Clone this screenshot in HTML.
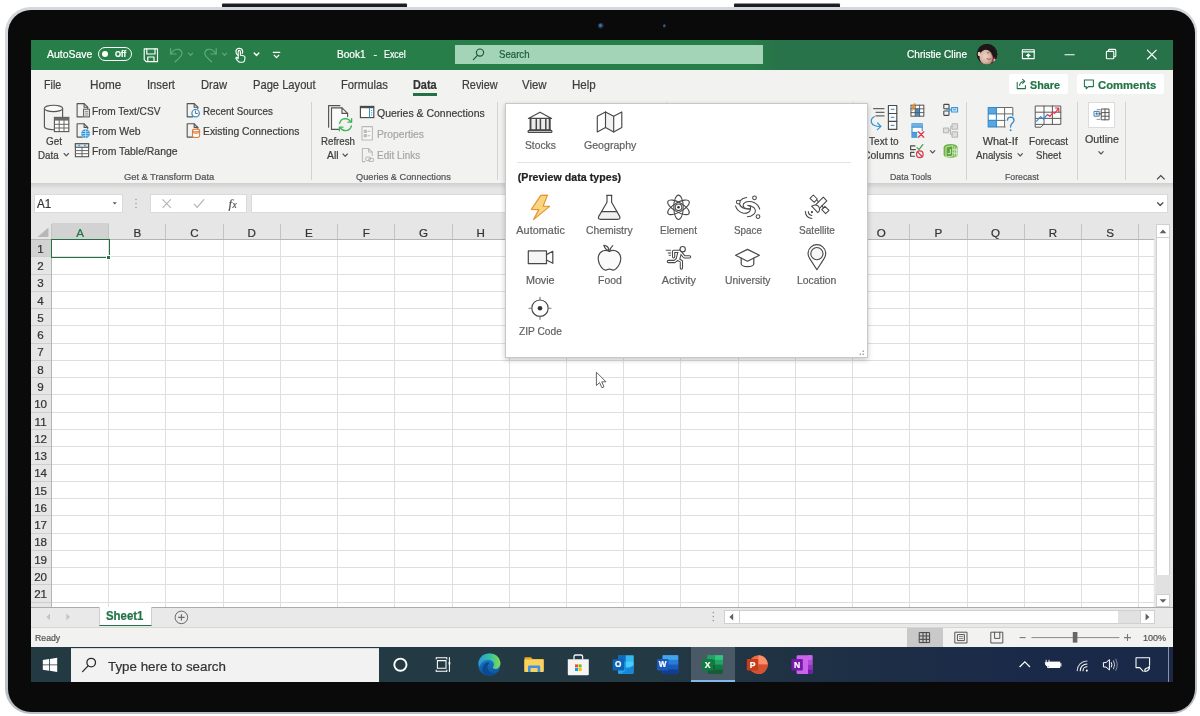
<!DOCTYPE html>
<html lang="en"><head><meta charset="utf-8"><title>Excel - Data Types</title>
<style>
html,body{margin:0;padding:0;background:#fff;}
body{width:1200px;height:716px;position:relative;overflow:hidden;font-family:"Liberation Sans",sans-serif;}
#stage{position:absolute;left:0;top:0;width:1200px;height:716px;overflow:hidden;will-change:transform;}
#stage div,#stage svg,#stage span{position:absolute;box-sizing:border-box;}
#stage svg{overflow:visible;}
.t{white-space:pre;line-height:1;transform-origin:0 50%;-webkit-text-stroke:0.22px currentColor;}
</style></head><body><div id="stage">
<div style="left:222.00px;top:3.40px;width:185.00px;height:5.60px;background:#1d1e22;border-radius:1.5px 1.5px 0 0;border-top:1px solid #8d9196;"></div>
<div style="left:734.00px;top:3.40px;width:106.00px;height:5.60px;background:#1d1e22;border-radius:1.5px 1.5px 0 0;border-top:1px solid #8d9196;"></div>
<div style="left:5.30px;top:6.80px;width:1192.10px;height:707.00px;background:linear-gradient(180deg,#d4d8dc,#b9bec4);border-radius:25.5px;"></div>
<div style="left:7.80px;top:9.60px;width:1187.20px;height:702.00px;background:#0a0a0a;border-radius:23px;"></div>
<div style="left:598.00px;top:22.60px;width:6.40px;height:6.40px;background:radial-gradient(circle at 40% 40%,#5b86b8 0,#1d3350 45%,#0a0f18 75%);border-radius:50%;"></div>
<div style="left:663.00px;top:24.20px;width:3.40px;height:3.40px;background:radial-gradient(circle at 40% 40%,#4a74a8 0,#16263d 60%,#0a0a0a 100%);border-radius:50%;"></div>
<div style="left:31.00px;top:40.20px;width:1141.80px;height:642.10px;background:#fff;"></div>
<div style="left:31.00px;top:40.20px;width:1141.80px;height:29.70px;background:linear-gradient(90deg,#277e48 0%,#277e48 63%,#28734a 65.5%,#28724a 100%);"></div>
<div style="left:31.00px;top:69.50px;width:1141.80px;height:113.70px;background:#f2f2f1;"></div>
<div style="left:31.00px;top:183.20px;width:1141.80px;height:40.10px;background:#e6e6e6;"></div>
<div style="left:31.00px;top:183.20px;width:1141.80px;height:5.80px;background:linear-gradient(180deg,rgba(0,0,0,.10),rgba(0,0,0,0));"></div>
<span class="t" style="left:47.00px;top:49.49px;font-size:11px;color:#ffffff;transform:scaleX(0.9517);">AutoSave</span>
<div style="left:97.50px;top:46.80px;width:34.70px;height:14.40px;border:1.1px solid #fff;border-radius:8px;"></div>
<div style="left:102.20px;top:51.00px;width:6.20px;height:6.20px;background:#fff;border-radius:50%;"></div>
<span class="t" style="left:115.20px;top:50.41px;font-size:8.4px;color:#ffffff;transform:scaleX(0.9234);font-weight:700;">Off</span>
<span class="t" style="left:336.90px;top:49.21px;font-size:10.6px;color:#ffffff;transform:scaleX(0.9549);">Book1</span>
<span class="t" style="left:373.60px;top:49.21px;font-size:10.6px;color:#ffffff;">-</span>
<span class="t" style="left:383.60px;top:49.21px;font-size:10.6px;color:#ffffff;transform:scaleX(0.8372);">Excel</span>
<div style="left:455.00px;top:45.00px;width:307.50px;height:19.20px;background:#a3d4b8;"></div>
<span class="t" style="left:498.90px;top:49.39px;font-size:11px;color:#1d5a38;transform:scaleX(0.8751);">Search</span>
<span class="t" style="left:906.50px;top:49.28px;font-size:11.2px;color:#ffffff;transform:scaleX(0.9024);">Christie Cline</span>
<span class="t" style="left:43.80px;top:78.53px;font-size:12.2px;color:#3e3e3e;transform:scaleX(0.8749);">File</span>
<span class="t" style="left:89.60px;top:78.53px;font-size:12.2px;color:#3e3e3e;transform:scaleX(0.9648);">Home</span>
<span class="t" style="left:147.00px;top:78.53px;font-size:12.2px;color:#3e3e3e;transform:scaleX(0.9177);">Insert</span>
<span class="t" style="left:200.70px;top:78.53px;font-size:12.2px;color:#3e3e3e;transform:scaleX(0.9168);">Draw</span>
<span class="t" style="left:252.50px;top:78.53px;font-size:12.2px;color:#3e3e3e;transform:scaleX(0.9151);">Page Layout</span>
<span class="t" style="left:341.30px;top:78.53px;font-size:12.2px;color:#3e3e3e;transform:scaleX(0.9224);">Formulas</span>
<span class="t" style="left:413.40px;top:78.53px;font-size:12.2px;color:#333;transform:scaleX(0.8924);font-weight:700;">Data</span>
<div style="left:413.20px;top:93.40px;width:24.20px;height:3.00px;background:#217346;"></div>
<span class="t" style="left:461.50px;top:78.53px;font-size:12.2px;color:#3e3e3e;transform:scaleX(0.8924);">Review</span>
<span class="t" style="left:521.90px;top:78.53px;font-size:12.2px;color:#3e3e3e;transform:scaleX(0.9381);">View</span>
<span class="t" style="left:571.70px;top:78.53px;font-size:12.2px;color:#3e3e3e;transform:scaleX(0.9485);">Help</span>
<div style="left:1009.20px;top:74.00px;width:59.20px;height:20.20px;background:#fff;border-radius:2.5px;"></div>
<div style="left:1076.60px;top:74.00px;width:87.70px;height:20.20px;background:#fff;border-radius:2.5px;"></div>
<span class="t" style="left:1030.00px;top:79.06px;font-size:11.6px;color:#217346;transform:scaleX(0.9305);font-weight:700;">Share</span>
<span class="t" style="left:1098.00px;top:79.06px;font-size:11.6px;color:#217346;transform:scaleX(0.9709);font-weight:700;">Comments</span>
<span class="t" style="left:46.00px;top:135.84px;font-size:10.9px;color:#3e3e3e;transform:scaleX(0.9107);">Get</span>
<span class="t" style="left:38.40px;top:149.84px;font-size:10.9px;color:#3e3e3e;transform:scaleX(0.8947);">Data</span>
<span class="t" style="left:92.00px;top:106.04px;font-size:10.9px;color:#3e3e3e;transform:scaleX(0.9295);">From Text/CSV</span>
<span class="t" style="left:92.00px;top:126.14px;font-size:10.9px;color:#3e3e3e;transform:scaleX(0.9610);">From Web</span>
<span class="t" style="left:92.00px;top:146.44px;font-size:10.9px;color:#3e3e3e;transform:scaleX(0.9567);">From Table/Range</span>
<span class="t" style="left:202.50px;top:106.04px;font-size:10.9px;color:#3e3e3e;transform:scaleX(0.9013);">Recent Sources</span>
<span class="t" style="left:202.50px;top:126.14px;font-size:10.9px;color:#3e3e3e;transform:scaleX(0.9480);">Existing Connections</span>
<span class="t" style="left:124.00px;top:172.16px;font-size:9.4px;color:#555;letter-spacing:-0.049px;">Get &amp; Transform Data</span>
<div style="left:311.00px;top:101.60px;width:1.00px;height:78.40px;background:#d4d2d0;"></div>
<span class="t" style="left:321.00px;top:136.04px;font-size:10.9px;color:#3e3e3e;transform:scaleX(0.8908);">Refresh</span>
<span class="t" style="left:327.00px;top:150.24px;font-size:10.9px;color:#3e3e3e;transform:scaleX(0.9493);">All</span>
<span class="t" style="left:376.80px;top:107.84px;font-size:10.9px;color:#3e3e3e;transform:scaleX(0.9617);">Queries &amp; Connections</span>
<span class="t" style="left:376.80px;top:129.24px;font-size:10.9px;color:#a6a6a6;transform:scaleX(0.9461);">Properties</span>
<span class="t" style="left:376.80px;top:150.44px;font-size:10.9px;color:#a6a6a6;transform:scaleX(0.9141);">Edit Links</span>
<span class="t" style="left:356.00px;top:172.16px;font-size:9.4px;color:#555;transform:scaleX(0.9828);">Queries &amp; Connections</span>
<div style="left:497.00px;top:101.60px;width:1.00px;height:78.40px;background:#d4d2d0;"></div>
<div style="left:666.20px;top:101.60px;width:1.00px;height:1.80px;background:#d4d2d0;"></div>
<div style="left:852.80px;top:101.60px;width:1.00px;height:1.80px;background:#d4d2d0;"></div>
<span class="t" style="left:869.30px;top:135.84px;font-size:10.9px;color:#3e3e3e;transform:scaleX(0.9250);">Text to</span>
<span class="t" style="left:863.30px;top:149.84px;font-size:10.9px;color:#3e3e3e;transform:scaleX(0.9579);">Columns</span>
<span class="t" style="left:889.50px;top:172.16px;font-size:9.4px;color:#555;transform:scaleX(0.9380);">Data Tools</span>
<div style="left:966.10px;top:101.60px;width:1.00px;height:78.40px;background:#d4d2d0;"></div>
<span class="t" style="left:982.80px;top:135.84px;font-size:10.9px;color:#3e3e3e;letter-spacing:-0.038px;">What-If</span>
<span class="t" style="left:976.00px;top:149.84px;font-size:10.9px;color:#3e3e3e;transform:scaleX(0.8943);">Analysis</span>
<span class="t" style="left:1028.80px;top:135.84px;font-size:10.9px;color:#3e3e3e;transform:scaleX(0.9245);">Forecast</span>
<span class="t" style="left:1035.70px;top:149.84px;font-size:10.9px;color:#3e3e3e;transform:scaleX(0.8811);">Sheet</span>
<span class="t" style="left:1004.60px;top:172.16px;font-size:9.4px;color:#555;transform:scaleX(0.9298);">Forecast</span>
<div style="left:1076.50px;top:101.60px;width:1.00px;height:78.40px;background:#d4d2d0;"></div>
<div style="left:1088.00px;top:102.40px;width:27.20px;height:25.60px;background:#fff;border:1px solid #dcdcdc;"></div>
<span class="t" style="left:1084.70px;top:134.14px;font-size:10.9px;color:#3e3e3e;transform:scaleX(0.9845);">Outline</span>
<div style="left:1124.50px;top:101.60px;width:1.00px;height:78.40px;background:#d4d2d0;"></div>
<div style="left:33.70px;top:194.00px;width:88.90px;height:19.40px;background:#fff;border:1px solid #dadada;"></div>
<span class="t" style="left:36.80px;top:198.24px;font-size:12px;color:#333;transform:scaleX(0.9674);">A1</span>
<div style="left:150.40px;top:194.00px;width:97.00px;height:19.40px;background:#fff;border:1px solid #dadada;"></div>
<div style="left:250.80px;top:194.00px;width:917.40px;height:19.40px;background:#fff;border:1px solid #dadada;"></div>
<span class="t" style="left:228.60px;top:197.10px;font-size:13px;color:#555;font-family:'Liberation Serif',serif;font-style:italic;">f</span>
<span class="t" style="left:232.60px;top:200.61px;font-size:9.5px;color:#555;font-family:'Liberation Serif',serif;font-style:italic;">x</span>
<div style="left:31.00px;top:223.30px;width:1141.80px;height:16.20px;background:#e6e6e6;"></div>
<div style="left:31.00px;top:239.50px;width:20.50px;height:367.50px;background:#e6e6e6;"></div>
<div style="left:51.50px;top:223.30px;width:57.22px;height:16.20px;background:#d2d2d2;"></div>
<div style="left:31.00px;top:239.50px;width:20.50px;height:17.27px;background:#d2d2d2;"></div>
<svg style="left:0.00px;top:0.00px;" width="1200.00" height="716.00" viewBox="0 0 1200 716"><path d="M51.50 239.5 V607.0" stroke="#dfdfdf" stroke-width="1"/><path d="M51.50 224 V239.5" stroke="#c3c3c3" stroke-width="1"/><path d="M108.50 239.5 V607.0" stroke="#dfdfdf" stroke-width="1"/><path d="M108.50 224 V239.5" stroke="#c3c3c3" stroke-width="1"/><path d="M165.50 239.5 V607.0" stroke="#dfdfdf" stroke-width="1"/><path d="M165.50 224 V239.5" stroke="#c3c3c3" stroke-width="1"/><path d="M223.50 239.5 V607.0" stroke="#dfdfdf" stroke-width="1"/><path d="M223.50 224 V239.5" stroke="#c3c3c3" stroke-width="1"/><path d="M280.50 239.5 V607.0" stroke="#dfdfdf" stroke-width="1"/><path d="M280.50 224 V239.5" stroke="#c3c3c3" stroke-width="1"/><path d="M337.50 239.5 V607.0" stroke="#dfdfdf" stroke-width="1"/><path d="M337.50 224 V239.5" stroke="#c3c3c3" stroke-width="1"/><path d="M394.50 239.5 V607.0" stroke="#dfdfdf" stroke-width="1"/><path d="M394.50 224 V239.5" stroke="#c3c3c3" stroke-width="1"/><path d="M452.50 239.5 V607.0" stroke="#dfdfdf" stroke-width="1"/><path d="M452.50 224 V239.5" stroke="#c3c3c3" stroke-width="1"/><path d="M509.50 239.5 V607.0" stroke="#dfdfdf" stroke-width="1"/><path d="M509.50 224 V239.5" stroke="#c3c3c3" stroke-width="1"/><path d="M566.50 239.5 V607.0" stroke="#dfdfdf" stroke-width="1"/><path d="M566.50 224 V239.5" stroke="#c3c3c3" stroke-width="1"/><path d="M623.50 239.5 V607.0" stroke="#dfdfdf" stroke-width="1"/><path d="M623.50 224 V239.5" stroke="#c3c3c3" stroke-width="1"/><path d="M680.50 239.5 V607.0" stroke="#dfdfdf" stroke-width="1"/><path d="M680.50 224 V239.5" stroke="#c3c3c3" stroke-width="1"/><path d="M738.50 239.5 V607.0" stroke="#dfdfdf" stroke-width="1"/><path d="M738.50 224 V239.5" stroke="#c3c3c3" stroke-width="1"/><path d="M795.50 239.5 V607.0" stroke="#dfdfdf" stroke-width="1"/><path d="M795.50 224 V239.5" stroke="#c3c3c3" stroke-width="1"/><path d="M852.50 239.5 V607.0" stroke="#dfdfdf" stroke-width="1"/><path d="M852.50 224 V239.5" stroke="#c3c3c3" stroke-width="1"/><path d="M909.50 239.5 V607.0" stroke="#dfdfdf" stroke-width="1"/><path d="M909.50 224 V239.5" stroke="#c3c3c3" stroke-width="1"/><path d="M967.50 239.5 V607.0" stroke="#dfdfdf" stroke-width="1"/><path d="M967.50 224 V239.5" stroke="#c3c3c3" stroke-width="1"/><path d="M1024.50 239.5 V607.0" stroke="#dfdfdf" stroke-width="1"/><path d="M1024.50 224 V239.5" stroke="#c3c3c3" stroke-width="1"/><path d="M1081.50 239.5 V607.0" stroke="#dfdfdf" stroke-width="1"/><path d="M1081.50 224 V239.5" stroke="#c3c3c3" stroke-width="1"/><path d="M1138.50 239.5 V607.0" stroke="#dfdfdf" stroke-width="1"/><path d="M1138.50 224 V239.5" stroke="#c3c3c3" stroke-width="1"/><path d="M51.5 239.50 H1154.4" stroke="#dfdfdf" stroke-width="1"/><path d="M31 239.50 H51.5" stroke="#cdcdcd" stroke-width="1"/><path d="M51.5 256.50 H1154.4" stroke="#dfdfdf" stroke-width="1"/><path d="M31 256.50 H51.5" stroke="#cdcdcd" stroke-width="1"/><path d="M51.5 274.50 H1154.4" stroke="#dfdfdf" stroke-width="1"/><path d="M31 274.50 H51.5" stroke="#cdcdcd" stroke-width="1"/><path d="M51.5 291.50 H1154.4" stroke="#dfdfdf" stroke-width="1"/><path d="M31 291.50 H51.5" stroke="#cdcdcd" stroke-width="1"/><path d="M51.5 308.50 H1154.4" stroke="#dfdfdf" stroke-width="1"/><path d="M31 308.50 H51.5" stroke="#cdcdcd" stroke-width="1"/><path d="M51.5 325.50 H1154.4" stroke="#dfdfdf" stroke-width="1"/><path d="M31 325.50 H51.5" stroke="#cdcdcd" stroke-width="1"/><path d="M51.5 343.50 H1154.4" stroke="#dfdfdf" stroke-width="1"/><path d="M31 343.50 H51.5" stroke="#cdcdcd" stroke-width="1"/><path d="M51.5 360.50 H1154.4" stroke="#dfdfdf" stroke-width="1"/><path d="M31 360.50 H51.5" stroke="#cdcdcd" stroke-width="1"/><path d="M51.5 377.50 H1154.4" stroke="#dfdfdf" stroke-width="1"/><path d="M31 377.50 H51.5" stroke="#cdcdcd" stroke-width="1"/><path d="M51.5 394.50 H1154.4" stroke="#dfdfdf" stroke-width="1"/><path d="M31 394.50 H51.5" stroke="#cdcdcd" stroke-width="1"/><path d="M51.5 412.50 H1154.4" stroke="#dfdfdf" stroke-width="1"/><path d="M31 412.50 H51.5" stroke="#cdcdcd" stroke-width="1"/><path d="M51.5 429.50 H1154.4" stroke="#dfdfdf" stroke-width="1"/><path d="M31 429.50 H51.5" stroke="#cdcdcd" stroke-width="1"/><path d="M51.5 446.50 H1154.4" stroke="#dfdfdf" stroke-width="1"/><path d="M31 446.50 H51.5" stroke="#cdcdcd" stroke-width="1"/><path d="M51.5 464.50 H1154.4" stroke="#dfdfdf" stroke-width="1"/><path d="M31 464.50 H51.5" stroke="#cdcdcd" stroke-width="1"/><path d="M51.5 481.50 H1154.4" stroke="#dfdfdf" stroke-width="1"/><path d="M31 481.50 H51.5" stroke="#cdcdcd" stroke-width="1"/><path d="M51.5 498.50 H1154.4" stroke="#dfdfdf" stroke-width="1"/><path d="M31 498.50 H51.5" stroke="#cdcdcd" stroke-width="1"/><path d="M51.5 515.50 H1154.4" stroke="#dfdfdf" stroke-width="1"/><path d="M31 515.50 H51.5" stroke="#cdcdcd" stroke-width="1"/><path d="M51.5 533.50 H1154.4" stroke="#dfdfdf" stroke-width="1"/><path d="M31 533.50 H51.5" stroke="#cdcdcd" stroke-width="1"/><path d="M51.5 550.50 H1154.4" stroke="#dfdfdf" stroke-width="1"/><path d="M31 550.50 H51.5" stroke="#cdcdcd" stroke-width="1"/><path d="M51.5 567.50 H1154.4" stroke="#dfdfdf" stroke-width="1"/><path d="M31 567.50 H51.5" stroke="#cdcdcd" stroke-width="1"/><path d="M51.5 584.50 H1154.4" stroke="#dfdfdf" stroke-width="1"/><path d="M31 584.50 H51.5" stroke="#cdcdcd" stroke-width="1"/><path d="M51.5 602.50 H1154.4" stroke="#dfdfdf" stroke-width="1"/><path d="M31 602.50 H51.5" stroke="#cdcdcd" stroke-width="1"/><path d="M31 239.5 H1154.4" stroke="#b4b4b4" stroke-width="1"/><path d="M51.5 239.5 V607.0" stroke="#b4b4b4" stroke-width="1"/><path d="M1154.4 239.5 V607.0" stroke="#c2c2c2" stroke-width="1"/></svg>
<svg style="left:31.00px;top:223.30px;" width="20.50" height="16.20" viewBox="0 0 20.50 16.20"><path d="M17.5 4.5 V14 H6.5 Z" fill="#b7b7b7"/></svg>
<span class="t" style="left:76.24px;top:227.06px;font-size:11.6px;color:#217346;">A</span>
<span class="t" style="left:133.46px;top:227.06px;font-size:11.6px;color:#333;">B</span>
<span class="t" style="left:190.36px;top:227.06px;font-size:11.6px;color:#333;">C</span>
<span class="t" style="left:247.58px;top:227.06px;font-size:11.6px;color:#333;">D</span>
<span class="t" style="left:305.12px;top:227.06px;font-size:11.6px;color:#333;">E</span>
<span class="t" style="left:362.67px;top:227.06px;font-size:11.6px;color:#333;">F</span>
<span class="t" style="left:418.92px;top:227.06px;font-size:11.6px;color:#333;">G</span>
<span class="t" style="left:476.46px;top:227.06px;font-size:11.6px;color:#333;">H</span>
<span class="t" style="left:536.26px;top:227.06px;font-size:11.6px;color:#333;">I</span>
<span class="t" style="left:592.19px;top:227.06px;font-size:11.6px;color:#333;">J</span>
<span class="t" style="left:648.44px;top:227.06px;font-size:11.6px;color:#333;">K</span>
<span class="t" style="left:706.30px;top:227.06px;font-size:11.6px;color:#333;">L</span>
<span class="t" style="left:761.92px;top:227.06px;font-size:11.6px;color:#333;">M</span>
<span class="t" style="left:819.78px;top:227.06px;font-size:11.6px;color:#333;">N</span>
<span class="t" style="left:876.68px;top:227.06px;font-size:11.6px;color:#333;">O</span>
<span class="t" style="left:934.54px;top:227.06px;font-size:11.6px;color:#333;">P</span>
<span class="t" style="left:991.12px;top:227.06px;font-size:11.6px;color:#333;">Q</span>
<span class="t" style="left:1048.66px;top:227.06px;font-size:11.6px;color:#333;">R</span>
<span class="t" style="left:1106.20px;top:227.06px;font-size:11.6px;color:#333;">S</span>
<span class="t" style="left:37.37px;top:242.80px;font-size:11.6px;color:#333;">1</span>
<span class="t" style="left:37.37px;top:260.07px;font-size:11.6px;color:#333;">2</span>
<span class="t" style="left:37.37px;top:277.34px;font-size:11.6px;color:#333;">3</span>
<span class="t" style="left:37.37px;top:294.61px;font-size:11.6px;color:#333;">4</span>
<span class="t" style="left:37.37px;top:311.88px;font-size:11.6px;color:#333;">5</span>
<span class="t" style="left:37.37px;top:329.15px;font-size:11.6px;color:#333;">6</span>
<span class="t" style="left:37.37px;top:346.42px;font-size:11.6px;color:#333;">7</span>
<span class="t" style="left:37.37px;top:363.69px;font-size:11.6px;color:#333;">8</span>
<span class="t" style="left:37.37px;top:380.96px;font-size:11.6px;color:#333;">9</span>
<span class="t" style="left:34.15px;top:398.23px;font-size:11.6px;color:#333;">10</span>
<span class="t" style="left:34.58px;top:415.50px;font-size:11.6px;color:#333;">11</span>
<span class="t" style="left:34.15px;top:432.77px;font-size:11.6px;color:#333;">12</span>
<span class="t" style="left:34.15px;top:450.04px;font-size:11.6px;color:#333;">13</span>
<span class="t" style="left:34.15px;top:467.31px;font-size:11.6px;color:#333;">14</span>
<span class="t" style="left:34.15px;top:484.58px;font-size:11.6px;color:#333;">15</span>
<span class="t" style="left:34.15px;top:501.85px;font-size:11.6px;color:#333;">16</span>
<span class="t" style="left:34.15px;top:519.12px;font-size:11.6px;color:#333;">17</span>
<span class="t" style="left:34.15px;top:536.39px;font-size:11.6px;color:#333;">18</span>
<span class="t" style="left:34.15px;top:553.66px;font-size:11.6px;color:#333;">19</span>
<span class="t" style="left:34.15px;top:570.93px;font-size:11.6px;color:#333;">20</span>
<span class="t" style="left:34.15px;top:588.20px;font-size:11.6px;color:#333;">21</span>
<div style="left:50.50px;top:238.50px;width:59.22px;height:19.27px;border:1.6px solid #217346;"></div>
<div style="left:106.32px;top:254.57px;width:5.00px;height:5.00px;background:#217346;border:0.8px solid #fff;"></div>
<div style="left:1154.40px;top:223.30px;width:18.40px;height:383.70px;background:#e6e6e6;"></div>
<div style="left:1156.40px;top:223.60px;width:14.00px;height:14.60px;background:#fff;border:1px solid #d0d0d0;"></div>
<div style="left:1156.40px;top:238.20px;width:14.00px;height:336.80px;background:#fff;border-left:1px solid #d0d0d0;border-right:1px solid #d0d0d0;"></div>
<div style="left:1156.40px;top:575.00px;width:14.00px;height:18.60px;background:#e1e1e1;"></div>
<div style="left:1156.40px;top:593.60px;width:14.00px;height:13.70px;background:#fff;border:1px solid #d0d0d0;"></div>
<svg style="left:1156.40px;top:223.60px;" width="14.00" height="14.60" viewBox="0 0 14.00 14.60"><path d="M3.6 9.2 L7 5.6 L10.4 9.2 Z" fill="#606060"/></svg>
<svg style="left:1156.40px;top:593.60px;" width="14.00" height="13.70" viewBox="0 0 14.00 13.70"><path d="M3.6 5.2 L7 8.8 L10.4 5.2 Z" fill="#606060"/></svg>
<div style="left:31.00px;top:607.00px;width:1141.80px;height:20.60px;background:#e9e9e9;border-top:1px solid #ababab;border-bottom:1px solid #d6d6d6;"></div>
<div style="left:99.00px;top:607.00px;width:52.80px;height:18.60px;background:#fff;border-bottom:1.6px solid #217346;border-left:1px solid #cfcfcf;border-right:1px solid #cfcfcf;"></div>
<span class="t" style="left:106.30px;top:610.13px;font-size:12.2px;color:#217346;transform:scaleX(0.9348);font-weight:700;">Sheet1</span>
<svg style="left:40.00px;top:608.00px;" width="40.00" height="18.00" viewBox="0 0 40.00 18.00"><path d="M10 5.6 L6.4 8.9 L10 12.2 Z M26.4 5.6 L30 8.9 L26.4 12.2 Z" fill="#c4c4c4"/></svg>
<svg style="left:174.00px;top:609.50px;" width="15.00" height="15.00" viewBox="0 0 15.00 15.00"><circle cx="7.4" cy="7.4" r="6.3" fill="none" stroke="#6a6a6a" stroke-width="1"/><path d="M7.4 4.2 V10.6 M4.2 7.4 H10.6" stroke="#6a6a6a" stroke-width="1.1"/></svg>
<svg style="left:710.00px;top:609.00px;" width="7.00" height="16.00" viewBox="0 0 7.00 16.00"><circle cx="3.3" cy="3.6" r="0.8" fill="#9a9a9a"/><circle cx="3.3" cy="7.6" r="0.8" fill="#9a9a9a"/><circle cx="3.3" cy="11.6" r="0.8" fill="#9a9a9a"/></svg>
<div style="left:724.40px;top:609.80px;width:430.20px;height:13.80px;background:#fff;border:1px solid #d0d0d0;"></div>
<div style="left:739.20px;top:609.80px;width:1.00px;height:13.80px;background:#d0d0d0;"></div>
<div style="left:1118.20px;top:610.80px;width:21.80px;height:11.80px;background:#e1e1e1;"></div>
<div style="left:1140.00px;top:609.80px;width:14.60px;height:13.80px;background:#fff;border:1px solid #d0d0d0;"></div>
<svg style="left:724.40px;top:609.80px;" width="15.00" height="13.80" viewBox="0 0 15.00 13.80"><path d="M9.2 3.4 L5.4 6.9 L9.2 10.4 Z" fill="#606060"/></svg>
<svg style="left:1140.00px;top:609.80px;" width="14.60" height="13.80" viewBox="0 0 14.60 13.80"><path d="M5.6 3.4 L9.4 6.9 L5.6 10.4 Z" fill="#606060"/></svg>
<div style="left:31.00px;top:627.60px;width:1141.80px;height:19.60px;background:#f2f2f1;"></div>
<span class="t" style="left:34.80px;top:633.25px;font-size:9.6px;color:#555;transform:scaleX(0.9081);">Ready</span>
<div style="left:907.30px;top:627.80px;width:35.40px;height:19.40px;background:#c9c9c9;"></div>
<span class="t" style="left:1142.80px;top:633.25px;font-size:9.6px;color:#555;transform:scaleX(0.9449);">100%</span>
<svg style="left:1015.00px;top:628.00px;" width="120.00" height="19.00" viewBox="0 0 120.00 19.00"><path d="M4.6 9.6 H10.6" stroke="#777" stroke-width="1.1"/><path d="M16.5 9.6 H104.4" stroke="#8a8a8a" stroke-width="1"/><rect x="57.8" y="4" width="4.6" height="10.6" fill="#666"/><path d="M109 9.6 H116 M112.5 6.1 V13.1" stroke="#777" stroke-width="1.1"/></svg>
<div style="left:31.00px;top:647.20px;width:1141.80px;height:35.10px;background:linear-gradient(90deg,#243a43 0%,#233944 55%,#1d2f45 72%,#1b2949 88%,#1b2949 100%);"></div>
<div style="left:71.00px;top:647.90px;width:308.00px;height:34.40px;background:#f2f2f2;border-top:1px solid #d8d8d8;"></div>
<span class="t" style="left:108.00px;top:659.57px;font-size:13.6px;color:#333;transform:scaleX(0.9817);">Type here to search</span>
<div style="left:691.20px;top:647.20px;width:43.60px;height:35.10px;background:#495a66;border-bottom:2px solid #7fb8ea;"></div>
<div style="left:1168.20px;top:647.20px;width:1.00px;height:35.10px;background:#8b93a6;"></div>
<svg style="left:0.00px;top:0.00px;" width="1200.00" height="716.00" viewBox="0 0 1200 716"><g fill="none" stroke="#fff" stroke-width="1.15" stroke-linejoin="round" stroke-linecap="round" ><path d="M144.2 48.8 H157.5 V61.6 H146.2 L144.2 59.6 Z"/><path d="M146.8 48.8 V54 H155 V48.8"/><path d="M147.8 61.6 V57 H154 V61.6"/></g><g fill="none" stroke="#62ab80" stroke-width="1.15" stroke-linejoin="round" stroke-linecap="round" ><path d="M170.6 48.6 V54 H176"/><path d="M170.8 53.8 Q174.2 48.4 179 49.4 Q182.6 50.8 181.8 54.6 Q181.2 56.4 175.2 61.8"/></g><path d="M188.50 53.10 L190.60 55.30 L192.70 53.10" fill="none" stroke="#62ab80" stroke-width="1.1" stroke-linecap="round" stroke-linejoin="round"/><g fill="none" stroke="#62ab80" stroke-width="1.15" stroke-linejoin="round" stroke-linecap="round" ><path d="M216.2 48.6 V54 H210.8"/><path d="M216 53.8 Q212.6 48.4 207.8 49.4 Q204.2 50.8 205 54.6 Q205.6 56.4 211.6 61.8"/></g><path d="M222.50 53.10 L224.60 55.30 L226.70 53.10" fill="none" stroke="#62ab80" stroke-width="1.1" stroke-linecap="round" stroke-linejoin="round"/><g fill="none" stroke="#fff" stroke-width="1.1" stroke-linejoin="round" stroke-linecap="round" ><path d="M238 55.4 Q235.8 53.8 235.9 51.4 Q236.2 48.4 239.3 48.3 Q242.4 48.4 242.7 51.4 Q242.7 52.4 242.2 53.4"/><path d="M238.2 58.6 V51.6 Q238.3 50.4 239.3 50.4 Q240.3 50.4 240.4 51.6 V55.2 L243.6 55.8 Q245.2 56.2 245 57.8 L244.6 60.4 Q244.2 62.2 242.6 62.2 H240 Q238.8 62.2 238 61.2 L236 58.6 Q235.6 57.6 236.6 57.4 Q237.4 57.4 238.2 58.6 Z"/></g><path d="M254.20 52.95 L256.50 55.45 L258.80 52.95" fill="none" stroke="#fff" stroke-width="1.4" stroke-linecap="round" stroke-linejoin="round"/><g fill="none" stroke="#fff" stroke-width="1.2" stroke-linejoin="round" stroke-linecap="round" ><path d="M273.2 52.3 H279.8"/></g><path d="M274.20 55.15 L276.50 57.65 L278.80 55.15" fill="none" stroke="#fff" stroke-width="1.3" stroke-linecap="round" stroke-linejoin="round"/><g fill="none" stroke="#1d5a38" stroke-width="1.2" stroke-linejoin="round" stroke-linecap="round" ><circle cx="480" cy="52.6" r="3.6"/><path d="M477.4 55.4 L473.4 59.6"/></g><defs><clipPath id="avc"><circle cx="987" cy="54.2" r="10.3"/></clipPath><radialGradient id="av" cx="45%" cy="40%" r="65%"><stop offset="0" stop-color="#ecd2c4"/><stop offset="0.6" stop-color="#d9b4a2"/><stop offset="1" stop-color="#9c6f5e"/></radialGradient></defs><g clip-path="url(#avc)"><rect x="976" y="43" width="22" height="23" fill="#1d1517"/><ellipse cx="986.2" cy="57.6" rx="6.6" ry="7.8" fill="url(#av)" transform="rotate(-14 986.2 57.6)"/><path d="M976 52 Q978 46.4 985 46.8 Q991.6 47.6 993.4 52.4 L998 50 V43 H976 Z" fill="#1d1517"/><path d="M993.2 50 Q996.4 54 995.2 60 L998 62 V48 Z" fill="#231a20"/><ellipse cx="979.2" cy="54" rx="1.5" ry="2.3" fill="#e6cabb"/><path d="M991.6 62 Q993.4 58.6 994 56.4 Q995.4 58 994.6 60.6 Q993.6 62.6 991.6 62 Z" fill="#a8404a"/><path d="M993.8 59.4 Q995.6 58.4 996.2 59.8 Q995.6 61.6 993.6 61.8 Z" fill="#ecd6cc"/><path d="M986.6 58.6 Q988.8 60.2 990.8 58.6" fill="none" stroke="#6a3a36" stroke-width="0.7"/><path d="M987 53 Q988.2 52.4 989.4 53 M991.4 54.4 Q992.2 54 993 54.6" fill="none" stroke="#4a3030" stroke-width="0.6"/></g><g fill="none" stroke="#fff" stroke-width="1.1" stroke-linejoin="round" stroke-linecap="round" ><rect x="1022.4" y="49.8" width="11.8" height="8.8"/><path d="M1022.4 51.9 H1034.2" stroke-width="1.4"/></g><path d="M1028.3 53.2 L1031 56 H1029.2 V57.6 H1027.4 V56 H1025.6 Z" fill="#fff"/><g fill="none" stroke="#fff" stroke-width="1.1" stroke-linejoin="round" stroke-linecap="round" ><path d="M1065 54.8 H1074.2"/></g><g fill="none" stroke="#fff" stroke-width="1.1" stroke-linejoin="round" stroke-linecap="round" ><rect x="1106.4" y="51.4" width="7.4" height="7.4" rx="0.8"/><path d="M1108.4 51.2 V50.4 Q1108.4 49.4 1109.4 49.4 H1114.8 Q1115.8 49.4 1115.8 50.4 V55.8 Q1115.8 56.8 1114.8 56.8 H1114"/></g><g fill="none" stroke="#fff" stroke-width="1.15" stroke-linejoin="round" stroke-linecap="round" ><path d="M1147.4 50.2 L1156.2 59 M1156.2 50.2 L1147.4 59"/></g><g fill="none" stroke="#217346" stroke-width="1.05" stroke-linejoin="round" stroke-linecap="round" ><path d="M1017.2 82.2 V88.6 H1025.4 V85.4"/><path d="M1019.6 85.4 Q1020.2 81.6 1024 81.4 M1022.6 79.4 L1024.8 81.4 L1022.6 83.4"/></g><g fill="none" stroke="#217346" stroke-width="1.05" stroke-linejoin="round" stroke-linecap="round" ><path d="M1084.4 80 H1093.4 V86.6 H1088.4 L1086.2 88.8 V86.6 H1084.4 Z"/></g><path d="M1157 179.4 L1160.8 175.6 L1164.6 179.4" fill="none" stroke="#444" stroke-width="1.2"/></svg>
<svg style="left:0.00px;top:0.00px;" width="1200.00" height="716.00" viewBox="0 0 1200 716"><g fill="none" stroke="#555" stroke-width="1.15" stroke-linejoin="round" stroke-linecap="round" ><path d="M44.4 108.4 V126.6 Q44.6 129.2 53.6 129.7 M62.6 108.4 V117" /><ellipse cx="53.5" cy="108.4" rx="9.1" ry="3.2" fill="#fafafa"/></g><rect x="54.4" y="117.4" width="14.4" height="14.2" fill="#fff" stroke="#555" stroke-width="1.1"/><rect x="54.4" y="117.4" width="14.4" height="3.2" fill="#6a6a6a"/><g fill="none" stroke="#666" stroke-width="1.0" stroke-linejoin="round" stroke-linecap="round" ><path d="M54.4 124.3 H68.8 M54.4 128 H68.8 M59.2 120.6 V131.6 M64 120.6 V131.6"/></g><path d="M64.10 153.50 L66.30 155.90 L68.50 153.50" fill="none" stroke="#555" stroke-width="1.15" stroke-linecap="round" stroke-linejoin="round"/><g fill="none" stroke="#555" stroke-width="1.1" stroke-linejoin="round" stroke-linecap="round" ><path d="M82.50 116.90 H77.10 V103.60 H84.10 L87.70 107.20 V108.40"/><path d="M84.10 103.60 V107.20 H87.70"/></g><rect x="83.6" y="109.2" width="5.8" height="7.7" fill="#f3f2f1" stroke="#555" stroke-width="1"/><g fill="none" stroke="#777" stroke-width="0.8" stroke-linejoin="round" stroke-linecap="round" ><path d="M85.2 111.4 H87.8 M85.2 113.2 H87.8 M85.2 115 H87.8"/></g><g fill="none" stroke="#555" stroke-width="1.1" stroke-linejoin="round" stroke-linecap="round" ><path d="M82.50 137.10 H77.10 V123.80 H84.10 L87.70 127.40 V128.60"/><path d="M84.10 123.80 V127.40 H87.70"/></g><circle cx="85.6" cy="133.6" r="4.4" fill="#2e95d8"/><g fill="none" stroke="#d7ecfa" stroke-width="0.7" stroke-linejoin="round" stroke-linecap="round" ><path d="M81.4 133.6 H89.8 M85.6 129.4 V137.8 M82.6 131.2 Q85.6 132.4 88.6 131.2 M82.6 136 Q85.6 134.8 88.6 136"/></g><rect x="75.4" y="143.7" width="13.2" height="13" fill="#fff" stroke="#555" stroke-width="1.1"/><rect x="75.4" y="143.7" width="13.2" height="3.6" fill="#e2e2e2" stroke="#555" stroke-width="1.1"/><g fill="none" stroke="#666" stroke-width="1.0" stroke-linejoin="round" stroke-linecap="round" ><path d="M75.4 150.6 H88.6 M75.4 153.7 H88.6 M82 147.3 V156.7"/></g><path d="M77.8 144.8 H80.6 L79.2 146.4 Z M83.6 144.8 H86.4 L85 146.4 Z" fill="#2e95d8"/><g fill="none" stroke="#555" stroke-width="1.1" stroke-linejoin="round" stroke-linecap="round" ><path d="M192.60 116.90 H187.20 V103.60 H194.20 L197.80 107.20 V108.40"/><path d="M194.20 103.60 V107.20 H197.80"/></g><circle cx="195.6" cy="113.2" r="3.7" fill="#fff" stroke="#2b8acb" stroke-width="1.2"/><g fill="none" stroke="#555" stroke-width="0.9" stroke-linejoin="round" stroke-linecap="round" ><path d="M195.4 111 V113.4 H197.4"/></g><g fill="none" stroke="#555" stroke-width="1.1" stroke-linejoin="round" stroke-linecap="round" ><path d="M192.60 137.10 H187.20 V123.80 H194.20 L197.80 127.40 V128.60"/><path d="M194.20 123.80 V127.40 H197.80"/></g><g fill="none" stroke="#e07b39" stroke-width="1.1" stroke-linejoin="round" stroke-linecap="round" ><path d="M192.5 130.6 V136.2 Q192.6 137.5 196 137.5 Q199.5 137.5 199.6 136.2 V130.6 M192.5 132.6 Q196 134 199.6 132.6" fill="#fff"/><ellipse cx="196.05" cy="130.5" rx="3.55" ry="1.4" fill="#fff"/></g><g fill="none" stroke="#555" stroke-width="1.15" stroke-linejoin="round" stroke-linecap="round" ><path d="M328.6 127.2 V105.6 H340"/></g><g fill="none" stroke="#555" stroke-width="1.15" stroke-linejoin="round" stroke-linecap="round" ><path d="M338.6 129.4 H331.5 V107.8 H342 L347.6 113.4 V116.6" fill="#fafafa"/><path d="M342 107.8 V113.4 H347.6"/></g><circle cx="345.5" cy="124.7" r="7.6" fill="#f3f2f1"/><g fill="none" stroke="#3cb55a" stroke-width="1.3" stroke-linejoin="round" stroke-linecap="round" ><path d="M339.6 123.4 Q340.8 118.8 345.5 118.7 Q349 118.8 350.8 121.8 M351.4 126 Q350.2 130.6 345.5 130.7 Q342 130.6 340.2 127.6"/><path d="M351.6 118.6 V122.2 H348 M339.4 130.8 V127.2 H343"/></g><path d="M343.00 154.00 L345.20 156.40 L347.40 154.00" fill="none" stroke="#555" stroke-width="1.15" stroke-linecap="round" stroke-linejoin="round"/><rect x="360.4" y="106.4" width="13.4" height="11.2" fill="#fff" stroke="#4a4a4a" stroke-width="1.15"/><rect x="360.4" y="106.2" width="13.4" height="2" fill="#4a4a4a"/><path d="M369.5 108 V117.4" stroke="#2e95d8" stroke-width="1"/><path d="M371.6 110 V111 M371.6 112.2 V113.2 M371.6 114.4 V115.4" stroke="#2e95d8" stroke-width="1.1"/><g fill="none" stroke="#b9b9b9" stroke-width="1.05" stroke-linejoin="round" stroke-linecap="round" ><rect x="362" y="126.6" width="10.4" height="13.3" fill="#f6f6f6"/><rect x="364.2" y="130.2" width="2.2" height="2.2" fill="#c6c6c6"/><rect x="364.2" y="134.6" width="2.2" height="2.2" fill="#c6c6c6"/><path d="M368 131.3 H370 M368 135.7 H370"/></g><g fill="none" stroke="#b9b9b9" stroke-width="1.05" stroke-linejoin="round" stroke-linecap="round" ><path d="M365 161.6 H362.4 V148.4 H368.6 L372.2 152 V155.4"/><path d="M368.6 148.4 V152 H372.2"/><rect x="365.6" y="157" width="5" height="3.4" rx="1.7"/><rect x="368.6" y="158.2" width="5" height="3.4" rx="1.7"/></g><g fill="none" stroke="#666" stroke-width="1.25" stroke-linejoin="round" stroke-linecap="round" ><path d="M873.6 108.6 H884 M876 112.3 H884 M876 115.9 H884"/></g><g fill="none" stroke="#3a96d2" stroke-width="1.2" stroke-linejoin="round" stroke-linecap="round" ><path d="M874.4 116.6 Q870.2 119 871.6 123 Q873.4 126.6 880.6 126.4 M877.6 123 L881 126.4 L877.4 129.6"/></g><g fill="none" stroke="#4a4a4a" stroke-width="1.15" stroke-linejoin="round" stroke-linecap="round" ><rect x="888.4" y="105.5" width="8.4" height="23.9" fill="#fdfdfd"/><path d="M888.4 113.5 H896.8 M888.4 121.4 H896.8"/></g><g fill="none" stroke="#4aa0dc" stroke-width="1.1" stroke-linejoin="round" stroke-linecap="round" ><path d="M891.2 109.4 H894 M891.2 117.4 H894 M891.2 125.4 H894"/></g><rect x="911" y="105.2" width="12.8" height="11" fill="#fff" stroke="#5a5a5a" stroke-width="1.05"/><rect x="915.2" y="108.6" width="4.4" height="7.6" fill="#3a8fd0"/><g fill="none" stroke="#5a5a5a" stroke-width="0.95" stroke-linejoin="round" stroke-linecap="round" ><path d="M911 108.8 H923.8 M911 112.6 H923.8 M915.2 105.2 V116.2 M919.6 105.2 V116.2"/></g><path d="M914.2 103.2 L911.2 108.2 H913 L911.6 112 L916 106.6 H913.8 L915.6 103.2 Z" fill="#f08a24"/><rect x="912" y="123.8" width="10.2" height="13.4" fill="#fff" stroke="#3a8fd0" stroke-width="1.1"/><rect x="912" y="123.8" width="10.2" height="3.4" fill="#6db3e6"/><rect x="912" y="132.4" width="5.4" height="4.8" fill="#4a9fe0"/><g fill="none" stroke="#3a8fd0" stroke-width="1" stroke-linejoin="round" stroke-linecap="round" ><path d="M912 127.2 H922.2 M912 132.4 H922.2"/></g><rect x="917.4" y="131" width="7.2" height="6.8" fill="#f3f2f1"/><g fill="none" stroke="#e0384c" stroke-width="1.25" stroke-linejoin="round" stroke-linecap="round" ><path d="M918.4 131.8 L923.8 137.2 M923.8 131.8 L918.4 137.2"/></g><g fill="none" stroke="#4a4a4a" stroke-width="1.15" stroke-linejoin="round" stroke-linecap="round" ><path d="M915 145.8 H910.6 V149.6 H915.4 M914 152.4 H910.6 V156.2 H914.6"/></g><g fill="none" stroke="#3aa655" stroke-width="1.25" stroke-linejoin="round" stroke-linecap="round" ><path d="M917 147.6 L919 149.6 L922.8 144.6"/></g><g fill="none" stroke="#d83b4a" stroke-width="1.25" stroke-linejoin="round" stroke-linecap="round" ><circle cx="919.8" cy="154.2" r="3.3" fill="#f3f2f1"/><path d="M917.5 151.9 L922.1 156.5"/></g><path d="M930.40 150.60 L932.60 153.00 L934.80 150.60" fill="none" stroke="#555" stroke-width="1.15" stroke-linecap="round" stroke-linejoin="round"/><g fill="none" stroke="#4a4a4a" stroke-width="1.1" stroke-linejoin="round" stroke-linecap="round" ><rect x="943.8" y="104.4" width="5.2" height="4.4" rx="0.6"/><rect x="943.8" y="111" width="5.2" height="4.4" rx="0.6"/></g><g fill="none" stroke="#3a96d2" stroke-width="1.05" stroke-linejoin="round" stroke-linecap="round" ><rect x="951.6" y="107.6" width="6" height="4.4" fill="#d7ecfa"/><path d="M946.4 109.8 H950.4 M949 108.2 L950.6 109.8 L949 111.4"/><path d="M953.4 109.8 H955.8"/></g><g fill="none" stroke="#b4b4b4" stroke-width="1.0" stroke-linejoin="round" stroke-linecap="round" ><rect x="943.8" y="128" width="5" height="4.8" fill="#dedede"/><rect x="952.4" y="123.8" width="5.2" height="5.4" fill="#dedede"/><rect x="952.4" y="131.8" width="5.2" height="5.4" fill="#dedede"/><path d="M948.8 130.4 H950.6 V126.4 H952.4 M950.6 130.4 V134.6 H952.4"/></g><path d="M943.6 147.6 Q943.8 144.2 950.6 144 Q957.4 144.2 957.6 147.6 V154.4 Q957.4 157.6 950.6 157.8 Q943.8 157.6 943.6 154.4 Z" fill="#6db544"/><g fill="none" stroke="#e6f4dc" stroke-width="0.8" stroke-linejoin="round" stroke-linecap="round" ><path d="M946.4 147 L952.8 145.6 V156 L946.4 157 Z" fill="#5da23a"/><path d="M954.8 146.8 V156.4 M956.6 148 V155.4 M952.8 149.6 L957.4 150.2 M952.8 153 L957.4 153.2"/><path d="M948.2 153.6 H950.4 V149.4"/></g><rect x="988.2" y="107.5" width="24.6" height="19.4" fill="#fff"/><rect x="988.2" y="107.5" width="8.2" height="6.4" fill="#5ba6de"/><rect x="988.2" y="120.4" width="8.2" height="6.5" fill="#5ba6de"/><g fill="none" stroke="#6a6a6a" stroke-width="1.0" stroke-linejoin="round" stroke-linecap="round" ><path d="M996.4 107.5 H1012.8 V117 M996.4 113.9 H1012.8 M996.4 120.4 H1006 M996.4 126.9 H1006 M1004.6 107.5 V126.9"/></g><g fill="none" stroke="#2f8ad0" stroke-width="1.1" stroke-linejoin="round" stroke-linecap="round" ><path d="M988.2 107.5 H996.4 V126.9 H988.2 Z M988.2 113.9 H996.4 M988.2 120.4 H996.4"/></g><rect x="1005.6" y="116.2" width="10" height="15.4" fill="#f3f2f1"/><g fill="none" stroke="#2f8ad0" stroke-width="1.3" stroke-linejoin="round" stroke-linecap="round" ><path d="M1007.4 120.2 Q1007.6 117.2 1010.8 117.2 Q1014 117.4 1014 120.2 Q1014 122 1012 123.4 Q1010.6 124.6 1010.6 127"/></g><circle cx="1010.6" cy="130.2" r="0.95" fill="#2f8ad0"/><g fill="none" stroke="#5a5a5a" stroke-width="1.0" stroke-linejoin="round" stroke-linecap="round" ><path d="M1035.6 106 H1060.8 V124.4 H1043.6 L1041 127.2 H1035.6 Z" fill="#fafafa"/><path d="M1035.6 112.2 H1060.8 M1035.6 118.4 H1060.8 M1044 106 V124.4 M1052.4 106 V124.4 M1035.6 124.4 H1043.6"/></g><g fill="none" stroke="#2f8ad0" stroke-width="1.2" stroke-linejoin="round" stroke-linecap="round" ><path d="M1036.6 121.2 L1040.6 116.6 L1043.4 119 L1047.4 114.6"/></g><g fill="none" stroke="#e0384c" stroke-width="1.2" stroke-linejoin="round" stroke-linecap="round" ><path d="M1047.4 114.6 L1050 116.4 L1053.2 112.2 L1054.6 113.4 L1058.6 108.4 M1055.4 108 L1058.8 108.2 L1058.8 111.6"/></g><g fill="none" stroke="#2f6fa8" stroke-width="0.9" stroke-linejoin="round" stroke-linecap="round" ><rect x="1094.4" y="111.4" width="4.8" height="4.8"/><path d="M1095.6 113.8 H1098 M1096.8 112.6 V115"/></g><g fill="none" stroke="#555" stroke-width="1.0" stroke-linejoin="round" stroke-linecap="round" ><rect x="1101.6" y="109" width="7.4" height="10.8"/><path d="M1101.6 112.6 H1109 M1101.6 116.2 H1109 M1105 109 V119.8 M1099.2 113.8 H1101.6"/><path d="M1097 109.6 H1100 M1097 119.4 H1100" stroke="#9a9a9a"/></g><path d="M1098.80 151.60 L1101.00 154.00 L1103.20 151.60" fill="none" stroke="#555" stroke-width="1.15" stroke-linecap="round" stroke-linejoin="round"/><path d="M1018.00 153.60 L1020.20 156.00 L1022.40 153.60" fill="none" stroke="#555" stroke-width="1.15" stroke-linecap="round" stroke-linejoin="round"/></svg>
<svg style="left:0.00px;top:0.00px;" width="1200.00" height="716.00" viewBox="0 0 1200 716"><path d="M112.6 202.2 H116.8 L114.7 204.6 Z" fill="#5a5a5a"/><circle cx="136" cy="199.6" r="0.75" fill="#9a9a9a"/><circle cx="136" cy="203.6" r="0.75" fill="#9a9a9a"/><circle cx="136" cy="207.6" r="0.75" fill="#9a9a9a"/><g fill="none" stroke="#b4b4b4" stroke-width="1.1" stroke-linejoin="round" stroke-linecap="round" ><path d="M162.8 199.6 L170.6 207.6 M170.6 199.6 L162.8 207.6"/></g><g fill="none" stroke="#b4b4b4" stroke-width="1.2" stroke-linejoin="round" stroke-linecap="round" ><path d="M194.2 204.2 L197.2 207.4 L203.8 199.6"/></g><path d="M1157.60 202.80 L1160.20 205.60 L1162.80 202.80" fill="none" stroke="#555" stroke-width="1.4" stroke-linecap="round" stroke-linejoin="round"/></svg>
<svg style="left:0.00px;top:0.00px;" width="1200.00" height="716.00" viewBox="0 0 1200 716"><g fill="none" stroke="#444" stroke-width="1.0" stroke-linejoin="round" stroke-linecap="round" ><rect x="919.6" y="632.6" width="10" height="10"/><path d="M919.6 636 H929.6 M919.6 639.3 H929.6 M923 632.6 V642.6 M926.3 632.6 V642.6"/></g><g fill="none" stroke="#555" stroke-width="1.0" stroke-linejoin="round" stroke-linecap="round" ><rect x="955.2" y="632.2" width="11.8" height="10.8"/><rect x="957.8" y="634.6" width="6.6" height="6"/><path d="M959.4 636.6 H962.8 M959.4 638.6 H962.8" stroke-width="0.7"/></g><g fill="none" stroke="#555" stroke-width="1.0" stroke-linejoin="round" stroke-linecap="round" ><rect x="991.2" y="632.2" width="11.6" height="10.8"/><path d="M994.6 632.2 V638.4 H999.8 V632.2"/></g></svg>
<div style="left:504.60px;top:103.20px;width:363.00px;height:255.00px;background:#fff;border:1px solid #c8c8c8;box-shadow:0 2px 5px rgba(0,0,0,.22);"></div>
<div style="left:517.00px;top:162.00px;width:334.00px;height:1.00px;background:#e3e3e3;"></div>
<svg style="left:0.00px;top:0.00px;" width="1200.00" height="716.00" viewBox="0 0 1200 716"><g fill="none" stroke="#484848" stroke-width="1.15" stroke-linejoin="round" stroke-linecap="round"><path d="M528.4 118.4 L540 112.2 L551.6 118.4 Z" fill="#fff"/>
<path d="M530.6 119.2 V129.6 M549.6 119.2 V129.6" stroke-width="1.7"/>
<path d="M530.6 119.4 H549.6 V129.6 H530.6 Z" fill="#ececec" stroke="none"/>
<path d="M530.6 119.2 V129.6 M549.6 119.2 V129.6" stroke-width="1.7"/>
<path d="M536.3 119.2 V129.6 M540.4 119.2 V129.6 M545.8 119.2 V129.6" stroke-width="1.5"/>
<path d="M529.6 129.9 H550.6" />
<path d="M529.2 130.4 H550.8 Q552 130.4 552 131.4 Q552 132.4 550.8 132.4 H529.2 Q528 132.4 528 131.4 Q528 130.4 529.2 130.4 Z" fill="#e6e6e6"/></g></svg>
<span class="t" style="left:525.00px;top:139.60px;font-size:10.8px;color:#626262;transform:scaleX(0.9503);">Stocks</span>
<svg style="left:0.00px;top:0.00px;" width="1200.00" height="716.00" viewBox="0 0 1200 716"><g fill="none" stroke="#484848" stroke-width="1.15" stroke-linejoin="round" stroke-linecap="round"><path d="M605.5 111.9 L613.7 116.2 V132 L605.5 127.6 Z" fill="#f2f2f2" stroke="none"/>
<path d="M597.3 116.2 L605.5 111.9 L613.7 116.2 L621.8 111.9 V127.6 L613.7 132 L605.5 127.6 L597.3 132 Z"/>
<path d="M605.5 111.9 V127.6 M613.7 116.2 V132"/></g></svg>
<span class="t" style="left:583.60px;top:139.60px;font-size:10.8px;color:#626262;transform:scaleX(0.9806);">Geography</span>
<span class="t" style="left:517.70px;top:171.71px;font-size:10.6px;color:#222;letter-spacing:0.052px;font-weight:700;">(Preview data types)</span>
<svg style="left:0.00px;top:0.00px;" width="1200.00" height="716.00" viewBox="0 0 1200 716"><g fill="none" stroke="#484848" stroke-width="1.15" stroke-linejoin="round" stroke-linecap="round"><path d="M540.8 195.3 L547.5 195.1 L543.1 206.2 L549.7 206.4 L533.6 219.6 L538.8 209.6 L531.4 209.4 Z" fill="#f9d582" stroke="#e8952f" stroke-width="1.2"/></g></svg>
<span class="t" style="left:516.30px;top:224.60px;font-size:10.8px;color:#626262;letter-spacing:0.072px;">Automatic</span>
<svg style="left:0.00px;top:0.00px;" width="1200.00" height="716.00" viewBox="0 0 1200 716"><g fill="none" stroke="#484848" stroke-width="1.15" stroke-linejoin="round" stroke-linecap="round"><path d="M601.3 211.6 H617.1 L619.8 216.6 Q620.6 219.2 618.2 219.3 H600.2 Q597.8 219.2 598.6 216.6 Z" fill="#f0f0f0" stroke="none"/>
<path d="M606.7 195.4 H611.9 M607 195.4 V202.2 L598.6 216.6 Q597.8 219.2 600.2 219.3 H618.2 Q620.6 219.2 619.8 216.6 L611.6 202.2 V195.4"/>
<path d="M601.5 211.6 H616.9"/></g></svg>
<span class="t" style="left:585.80px;top:224.60px;font-size:10.8px;color:#626262;transform:scaleX(0.9587);">Chemistry</span>
<svg style="left:0.00px;top:0.00px;" width="1200.00" height="716.00" viewBox="0 0 1200 716"><g fill="none" stroke="#484848" stroke-width="1.05" stroke-linejoin="round" stroke-linecap="round"><ellipse cx="678.5" cy="207.3" rx="4.7" ry="12.2"/>
<ellipse cx="678.5" cy="207.3" rx="4.7" ry="12.2" transform="rotate(60 678.5 207.3)"/>
<ellipse cx="678.5" cy="207.3" rx="4.7" ry="12.2" transform="rotate(-60 678.5 207.3)"/>
<circle cx="678.5" cy="207.3" r="3.3"/><circle cx="678.5" cy="207.3" r="1.3" fill="#333" stroke="none"/></g></svg>
<span class="t" style="left:660.00px;top:224.60px;font-size:10.8px;color:#626262;transform:scaleX(0.9339);">Element</span>
<svg style="left:0.00px;top:0.00px;" width="1200.00" height="716.00" viewBox="0 0 1200 716"><g fill="none" stroke="#484848" stroke-width="1.05" stroke-linejoin="round" stroke-linecap="round"><circle cx="754.5" cy="197.8" r="1.9"/><circle cx="758" cy="216.6" r="1.9"/><circle cx="738.3" cy="202.1" r="1.9"/>
<path d="M740 200.8 Q742.6 197.8 746.6 197.4"/>
<path d="M739.4 204 Q740.6 207.4 744.4 208.4 Q748.4 209.4 750 208.9 Q750.9 207.2 750.4 206.2"/>
<path d="M735.5 205.9 Q737.2 211.6 743.4 213.2 Q748.8 213.6 750.2 210.2 Q750.8 208 750.4 206.2 Q749.6 205.6 748 205.4"/>
<path d="M750.2 208.9 Q746.4 208.9 744.2 207.6 Q742.4 205.8 743.6 203.6 Q745.4 201.4 749.4 201.5 Q754.4 201.8 757.6 205.2 Q759.2 207.2 759.7 209.2"/>
<path d="M748 205.4 Q752 205.6 754.2 207.8 Q756.2 210.4 755.2 212.6 Q753.6 215.4 750.6 216.2 Q749 216.6 747.3 216.7"/></g></svg>
<span class="t" style="left:733.60px;top:224.60px;font-size:10.8px;color:#626262;transform:scaleX(0.9143);">Space</span>
<svg style="left:0.00px;top:0.00px;" width="1200.00" height="716.00" viewBox="0 0 1200 716"><g fill="none" stroke="#484848" stroke-width="1.05" stroke-linejoin="round" stroke-linecap="round"><path d="M823.3 197.1 L826.8 200.9 L819 208.8 L815.4 205.2 Z"/>
<path d="M811.6 206.2 Q817 203.6 819 207 Q820.6 210.6 817.8 212.6 Z" fill="#fff"/>
<path d="M813.3 195 L817.3 199 L814.2 202.3 L810 198.3 Z"/>
<path d="M824.9 206.4 L829 210.4 L825.6 213.7 L821.8 209.7 Z"/>
<path d="M816.6 199.8 L818.6 201.8 M822 205.4 L823.4 208"/>
<circle cx="811.9" cy="212.1" r="1.05" fill="#333" stroke="none"/>
<path d="M808.3 211.6 Q808.6 215 811.9 215.4 M805.3 211.4 Q805.8 217.8 811.9 218.5"/></g></svg>
<span class="t" style="left:798.70px;top:224.60px;font-size:10.8px;color:#626262;transform:scaleX(0.9343);">Satellite</span>
<svg style="left:0.00px;top:0.00px;" width="1200.00" height="716.00" viewBox="0 0 1200 716"><g fill="none" stroke="#484848" stroke-width="1.2" stroke-linejoin="round" stroke-linecap="round"><rect x="528.3" y="250.9" width="18.2" height="12.8" fill="#f5f5f5"/>
<path d="M546.5 254.6 L552.8 251.3 V263.3 L546.5 260"/></g></svg>
<span class="t" style="left:526.00px;top:275.10px;font-size:10.8px;color:#626262;letter-spacing:-0.077px;">Movie</span>
<svg style="left:0.00px;top:0.00px;" width="1200.00" height="716.00" viewBox="0 0 1200 716"><g fill="none" stroke="#484848" stroke-width="1.15" stroke-linejoin="round" stroke-linecap="round"><path d="M609.4 251.6 Q606.6 249.6 603.2 250.8 Q598 253 598.2 258.8 Q598.6 264.6 602.6 268.6 Q605 271 607.6 269.6 Q609.4 268.6 611.2 269.6 Q613.8 271 616.2 268.6 Q620.4 264.6 620.8 258.8 Q620.8 253 615.6 250.8 Q612.2 249.6 609.4 251.6 Z" fill="#fafafa"/>
<path d="M609.6 251.2 Q610.2 247.8 612.8 245.6"/>
<path d="M609.2 250.6 Q605.2 249.8 603.8 245.4 Q608.4 245.6 609.2 250.6 Z" fill="#fff"/></g></svg>
<span class="t" style="left:597.70px;top:275.10px;font-size:10.8px;color:#626262;transform:scaleX(0.9668);">Food</span>
<svg style="left:0.00px;top:0.00px;" width="1200.00" height="716.00" viewBox="0 0 1200 716"><g fill="none" stroke="#484848" stroke-width="1.1" stroke-linejoin="round" stroke-linecap="round"><path d="M680.4 252 L684.2 256.8 H689.6 M679.4 251.3 H673.6 V256.8 M677.8 259.2 L681.4 261.4 V268 M677.4 259.2 L674.6 261.5 H668.4" stroke-width="3.3"/><path d="M679.9 252 L678 258.6" stroke-width="4.7"/><path d="M680.4 252 L684.2 256.8 H689.6 M679.4 251.3 H673.6 V256.8 M677.8 259.2 L681.4 261.4 V268 M677.4 259.2 L674.6 261.5 H668.4" stroke="#fff" stroke-width="1.2"/><path d="M679.9 252 L678 258.6" stroke="#fff" stroke-width="2.6"/>
<circle cx="682.7" cy="249.2" r="2.65" fill="#fff"/>
<path d="M666.2 250.3 H670.6 M669 255.3 H670.6" stroke-width="0.9"/><path d="M668.3 253 H670.6" stroke-width="1.3" stroke="#777"/></g></svg>
<span class="t" style="left:661.80px;top:275.10px;font-size:10.8px;color:#626262;">Activity</span>
<svg style="left:0.00px;top:0.00px;" width="1200.00" height="716.00" viewBox="0 0 1200 716"><g fill="none" stroke="#484848" stroke-width="1.2" stroke-linejoin="round" stroke-linecap="round"><path d="M747.5 249.4 L759.4 255.3 L747.5 261.2 L735.6 255.3 Z"/>
<path d="M741.2 258.2 V264 Q741.6 266.6 747.5 266.6 Q753.4 266.6 753.8 264 V258.2"/></g></svg>
<span class="t" style="left:725.00px;top:275.10px;font-size:10.8px;color:#626262;transform:scaleX(0.9597);">University</span>
<svg style="left:0.00px;top:0.00px;" width="1200.00" height="716.00" viewBox="0 0 1200 716"><g fill="none" stroke="#484848" stroke-width="1.15" stroke-linejoin="round" stroke-linecap="round"><path d="M816.9 269.8 L809.6 258.4 A8.8 8.8 0 1 1 824.2 258.4 Z" fill="#fff"/>
<circle cx="816.9" cy="253.6" r="6.1" fill="#f6f6f6"/></g></svg>
<span class="t" style="left:796.80px;top:275.10px;font-size:10.8px;color:#626262;transform:scaleX(0.9649);">Location</span>
<svg style="left:0.00px;top:0.00px;" width="1200.00" height="716.00" viewBox="0 0 1200 716"><g fill="none" stroke="#484848" stroke-width="1.15" stroke-linejoin="round" stroke-linecap="round"><circle cx="540" cy="308.2" r="8.2"/><circle cx="540" cy="308.2" r="2.3" fill="#333" stroke="none"/>
<path d="M540 297.2 V300 M540 316.4 V319.2 M529 308.2 H531.8 M548.2 308.2 H551" stroke="#777"/></g></svg>
<span class="t" style="left:519.00px;top:325.80px;font-size:10.8px;color:#626262;transform:scaleX(0.9422);">ZIP Code</span>
<svg style="left:858.00px;top:349.00px;" width="8.00" height="8.00" viewBox="0 0 8.00 8.00"><rect x="4.6" y="1.6" width="1.3" height="1.3" fill="#8a8a8a"/><rect x="1.6" y="4.6" width="1.3" height="1.3" fill="#8a8a8a"/><rect x="4.6" y="4.6" width="1.3" height="1.3" fill="#8a8a8a"/></svg>
<svg style="left:594.00px;top:370.00px;" width="16.00" height="22.00" viewBox="0 0 16.00 22.00"><path d="M2.4 2.2 V15.6 L5.6 12.6 L7.9 17.8 L10 16.9 L7.8 11.8 H12 Z" fill="#fff" stroke="#555" stroke-width="0.9" stroke-linejoin="round"/></svg>
<svg style="left:0.00px;top:0.00px;" width="1200.00" height="716.00" viewBox="0 0 1200 716"><path d="M42.8 660 L49 659 V664.4 H42.8 Z M49.8 658.9 L57.2 657.7 V664.4 H49.8 Z M42.8 665.2 H49 V670.7 L42.8 669.8 Z M49.8 665.2 H57.2 V672 L49.8 670.8 Z" fill="#fff"/><g fill="none" stroke="#2a2a2a" stroke-width="1.3" stroke-linejoin="round" stroke-linecap="round" ><circle cx="91.2" cy="662.6" r="4.3"/><path d="M88.1 665.9 L82.6 671.6"/></g><circle cx="400.4" cy="664.7" r="6.1" fill="none" stroke="#fff" stroke-width="1.9"/><g fill="none" stroke="#fff" stroke-width="1.05" stroke-linejoin="round" stroke-linecap="round" ><rect x="437.4" y="660.6" width="8.6" height="7.6"/><path d="M436.4 657.8 H446.6 M436.4 671.2 H446.6 M449.4 657.6 V671.4"/><path d="M436.2 657.8 V659 M446.8 657.8 V659 M436.2 671.2 V670 M446.8 671.2 V670"/></g><rect x="448.6" y="662" width="1.7" height="2.6" fill="#fff"/><defs><linearGradient id="e1" x1="0" y1="0" x2="1" y2="0"><stop offset="0" stop-color="#2a9ad6"/><stop offset="0.55" stop-color="#35c1a0"/><stop offset="1" stop-color="#86dc4f"/></linearGradient><linearGradient id="e2" x1="0" y1="0" x2="0" y2="1"><stop offset="0" stop-color="#1b8ad8"/><stop offset="1" stop-color="#0f4f9c"/></linearGradient></defs><circle cx="489.3" cy="664.7" r="11.1" fill="url(#e2)"/><path d="M478.6 661.6 Q481 653.6 489.6 653.6 Q498.6 653.8 500.4 662 Q500.8 666.4 497.6 668.4 Q494 669.8 492.6 667.6 Q495.2 664.6 492.8 661.6 Q489.6 658.6 485 660.2 Q480.4 662.4 479.6 667 Q478.2 664.4 478.6 661.6 Z" fill="url(#e1)"/><path d="M484 664.4 Q486.4 661.6 490 662.6 Q487 665 487.6 668.6 Q488.6 672.4 493 673.4 Q496 673.6 498 672.2 Q494.4 676.2 489 675.8 Q483.4 675 482.4 670 Q482 666.8 484 664.4 Z" fill="#0c4a8e"/><path d="M524.4 658.6 Q524.4 657.2 525.6 657.2 H531 L532.6 659 H543.6 V671.8 H524.4 Z" fill="#e8a829"/><rect x="524.4" y="659.6" width="19.3" height="12.3" rx="0.8" fill="#f9d262"/><path d="M528 671.9 V666.6 Q528 665.6 529 665.6 H539.2 Q540.2 665.6 540.2 666.6 V671.9 H537.6 V668 H530.6 V671.9 Z" fill="#3f92dc"/><path d="M574 659.4 V656.6 Q574 655 575.6 655 H581 Q582.6 655 582.6 656.6 V659.4" fill="none" stroke="#f4f4f4" stroke-width="1.3"/><path d="M567.8 659.2 H588.8 V674.2 Q588.8 675.2 587.8 675.2 H568.8 Q567.8 675.2 567.8 674.2 Z" fill="#f4f4f4"/><rect x="575" y="664.4" width="3" height="3" fill="#f25022"/><rect x="578.6" y="664.4" width="3" height="3" fill="#7fba00"/><rect x="575" y="668" width="3" height="3" fill="#00a4ef"/><rect x="578.6" y="668" width="3" height="3" fill="#ffb900"/><rect x="618" y="655.4" width="15.6" height="18.4" rx="1.2" fill="#1490df"/><rect x="618" y="655.4" width="7.8" height="6" fill="#0f6cbd"/><rect x="625.8" y="655.4" width="7.8" height="6" fill="#35b8f1"/><rect x="625.8" y="661.4" width="7.8" height="6" fill="#50d9ff" opacity="0.85"/><path d="M618 667.4 L633.6 673.8 H619.2 Q618 673.8 618 672.6 Z" fill="#28a8ea"/><path d="M633.6 665 L621 673.8 H632.4 Q633.6 673.8 633.6 672.6 Z" fill="#1b86d6"/><rect x="612.6" y="659.2" width="11.4" height="11.4" rx="1.2" fill="#0f63b4"/><rect x="662.6" y="655.2" width="15.6" height="18.8" rx="1.2" fill="#2b7cd3"/><rect x="662.6" y="655.2" width="15.6" height="4.7" fill="#41a5ee"/><rect x="662.6" y="659.9" width="15.6" height="4.7" fill="#2b7cd3"/><rect x="662.6" y="664.6" width="15.6" height="4.7" fill="#185abd"/><path d="M662.6 669.3 H678.2 V672.8 Q678.2 674 677 674 H663.8 Q662.6 674 662.6 672.8 Z" fill="#103f91"/><rect x="657" y="659" width="11.4" height="11.4" rx="1.2" fill="#185abd"/><rect x="707.4" y="655.2" width="15.6" height="18.8" rx="1.2" fill="#21a366"/><rect x="707.4" y="655.2" width="7.8" height="4.7" fill="#21a366"/><rect x="715.2" y="655.2" width="7.8" height="4.7" fill="#33c481"/><rect x="707.4" y="659.9" width="7.8" height="4.7" fill="#107c41"/><rect x="715.2" y="659.9" width="7.8" height="4.7" fill="#21a366"/><rect x="707.4" y="664.6" width="7.8" height="4.7" fill="#185c37"/><rect x="715.2" y="664.6" width="7.8" height="4.7" fill="#107c41"/><path d="M707.4 669.3 H723 V672.8 Q723 674 721.8 674 H708.6 Q707.4 674 707.4 672.8 Z" fill="#185c37"/><rect x="702" y="659" width="11.4" height="11.4" rx="1.2" fill="#107c41"/><circle cx="758.4" cy="664.6" r="9.4" fill="#ed6c47"/><path d="M758.4 655.2 A9.4 9.4 0 0 1 767.8 664.6 H758.4 Z" fill="#ff8f6b"/><path d="M749 664.6 H767.8 A9.4 9.4 0 0 1 749 664.6 Z" fill="#d35230"/><rect x="746.8" y="659" width="11.4" height="11.4" rx="1.2" fill="#c43e1c"/><rect x="796.6" y="655.2" width="15.8" height="18.8" rx="1.2" fill="#ca64ea"/><rect x="808" y="655.2" width="4.4" height="4.7" fill="#ca64ea"/><rect x="808" y="659.9" width="4.4" height="4.7" fill="#ae4bd5"/><rect x="808" y="664.6" width="4.4" height="4.7" fill="#9332bf"/><rect x="808" y="669.3" width="4.4" height="4.7" fill="#7719aa"/><rect x="791.4" y="659" width="11.4" height="11.4" rx="1.2" fill="#7719aa"/></svg>
<span class="t" style="left:615.11px;top:661.02px;font-size:8.2px;color:#fff;font-weight:700;">O</span>
<span class="t" style="left:658.83px;top:661.02px;font-size:8.2px;color:#fff;font-weight:700;">W</span>
<span class="t" style="left:704.83px;top:660.80px;font-size:8.6px;color:#fff;font-weight:700;">X</span>
<span class="t" style="left:749.73px;top:660.80px;font-size:8.6px;color:#fff;font-weight:700;">P</span>
<span class="t" style="left:793.99px;top:660.80px;font-size:8.6px;color:#fff;font-weight:700;">N</span>
<svg style="left:0.00px;top:0.00px;" width="1200.00" height="716.00" viewBox="0 0 1200 716"><path d="M1019.6 667 L1024.8 661.8 L1030 667" fill="none" stroke="#fff" stroke-width="1.2"/><rect x="1048.6" y="661.6" width="11.6" height="6.4" fill="#fff"/><rect x="1060.2" y="663.2" width="1.2" height="3.2" fill="#fff"/><g fill="#fff" stroke="#fff" stroke-width="0.9" stroke-linejoin="round" stroke-linecap="round" ><path d="M1046.2 660.2 V662.2 M1049 660.2 V662.2 M1045.6 662.4 H1049.6 V664.4 Q1049.4 666 1047.6 666 Q1045.8 666 1045.6 664.4 Z M1047.6 666 V667.6 H1049"/></g><circle cx="1086.8" cy="670.6" r="1.05" fill="#fff"/><g fill="none" stroke="#fff" stroke-width="1.05" stroke-linejoin="round" stroke-linecap="round" ><path d="M1083 670.8 A4 4 0 0 1 1087 666.8" /><path d="M1080.2 670.8 A6.8 6.8 0 0 1 1087 664" /><path d="M1077.2 670.8 A9.8 9.8 0 0 1 1087 661" opacity="0.8"/></g><g fill="none" stroke="#fff" stroke-width="1.0" stroke-linejoin="round" stroke-linecap="round" ><path d="M1103.8 662.6 H1106 L1109.4 659.6 V670 L1106 667 H1103.8 Z"/><path d="M1111.4 662.6 Q1112.6 664.8 1111.4 667"/><path d="M1113.6 660.8 Q1115.8 664.8 1113.6 668.8" opacity="0.75"/><path d="M1115.8 659.2 Q1118.8 664.8 1115.8 670.4" opacity="0.45"/></g><g fill="none" stroke="#fff" stroke-width="1.05" stroke-linejoin="round" stroke-linecap="round" ><path d="M1149.6 665.2 V657.8 H1136 V667.6 H1139.8 L1143.2 671.3"/><path d="M1149.5 666.2 Q1149.9 670.9 1144.8 671.4 Q1144.4 669 1146.4 668.3 Q1148.6 668.3 1149.5 666.2 Z"/></g></svg>
</div></body></html>
